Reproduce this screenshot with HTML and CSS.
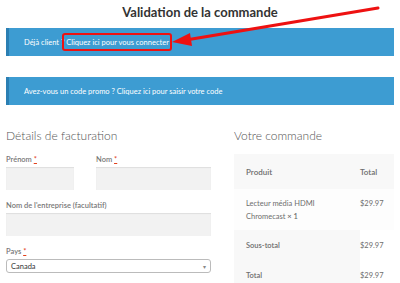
FILE: index.html
```html
<!DOCTYPE html>
<html lang="fr">

<head>
  <meta charset="UTF-8">
  <meta name="viewport" content="width=device-width, initial-scale=1.0">
  <title>Validation de la commande</title>
  <link rel="stylesheet" href="styles.css">
</head>

<body>
  <div class="page">
    <h1 class="page-title">Validation de la commande</h1>

    <div class="notices">
      <div class="notice">
        <span>Déjà client ? <a href="#" class="login-link">Cliquez ici pour vous connecter</a></span>
      </div>
      <div class="notice">
        <span>Avez-vous un code promo ? <a href="#">Cliquez ici pour saisir votre code</a></span>
      </div>
    </div>

    <div class="checkout">
      <div class="billing">
        <h3>Détails de facturation</h3>
        <div class="row-pair">
          <div class="field first">
            <label>Prénom <abbr>*</abbr></label>
            <div class="input"></div>
          </div>
          <div class="field last">
            <label>Nom <abbr>*</abbr></label>
            <div class="input"></div>
          </div>
        </div>
        <div class="field">
          <label>Nom de l'entreprise (facultatif)</label>
          <div class="input"></div>
        </div>
        <div class="field">
          <label>Pays <abbr>*</abbr></label>
          <div class="select">
            <span>Canada</span>
            <span class="caret">&#9662;</span>
          </div>
        </div>
      </div>

      <div class="review">
        <h3>Votre commande</h3>
        <table class="order">
          <thead>
            <tr>
              <th>Produit</th>
              <th>Total</th>
            </tr>
          </thead>
          <tbody>
            <tr class="item">
              <td>Lecteur média HDMI<br>Chromecast <strong>× 1</strong></td>
              <td>$29.97</td>
            </tr>
          </tbody>
          <tfoot>
            <tr>
              <th>Sous-total</th>
              <td>$29.97</td>
            </tr>
            <tr>
              <th>Total</th>
              <td>$29.97</td>
            </tr>
          </tfoot>
        </table>
      </div>
    </div>
  </div>

  <!-- annotation drawn over the screenshot -->
  <div class="highlight"></div>
  <svg class="arrow" width="400" height="60" viewBox="0 0 400 60">
    <line x1="378" y1="8" x2="186" y2="40" stroke="#ee1111" stroke-width="3" stroke-linecap="round" />
    <polygon points="172,42 190,33 192,46" fill="#ee1111" />
  </svg>
</body>

</html>
```

FILE: styles.css
```css
* {
  box-sizing: border-box;
  margin: 0;
  padding: 0;
}

body {
  font-family: Lato, "Open Sans", sans-serif;
  background: #fff;
  color: #6d6d6d;
  position: relative;
  overflow: hidden;
}

.page {
  padding: 0 6px;
}

.page-title {
  font-size: 13px;
  font-weight: 700;
  color: #333;
  text-align: center;
  height: 28px;
  line-height: 25px;
}

.notices {
  display: flex;
  flex-direction: column;
  gap: 21px;
  margin-bottom: 15px;
}

.notice {
  background: #3d9cd2;
  border-left: 3px solid #2b7fb3;
  height: 28px;
  display: flex;
  align-items: center;
  padding-left: 15px;
  font-size: 7.5px;
  color: #fff;
}

.notice a {
  color: #fff;
  text-decoration: none;
}

.checkout {
  display: grid;
  grid-template-columns: 205px 160px;
  column-gap: 23px;
}

.checkout h3 {
  font-size: 12px;
  font-weight: 300;
  color: #555;
  height: 34px;
  line-height: 32px;
}

.row-pair {
  display: flex;
  justify-content: space-between;
}

.field {
  margin-bottom: 10px;
}

.field.first {
  width: 68px;
}

.field.last {
  width: 115px;
}

.field label {
  display: block;
  font-size: 7.5px;
  font-weight: 600;
  color: #777;
  height: 13px;
  line-height: 12px;
}

.field abbr {
  color: #e2401c;
  text-decoration: underline;
}

.input {
  height: 23px;
  background: #f2f2f2;
  box-shadow: inset 0 1px 1px rgba(0, 0, 0, 0.08);
}

.select {
  height: 14px;
  border: 1px solid #bbb;
  border-radius: 3px;
  display: flex;
  justify-content: space-between;
  align-items: center;
  padding: 0 4px;
  font-size: 7.5px;
  color: #333;
}

.select .caret {
  font-size: 6px;
  color: #888;
}

.order {
  width: 100%;
  border-collapse: collapse;
  font-size: 7.5px;
  color: #6d6d6d;
}

.order th,
.order td {
  text-align: left;
  padding: 0 0 0 12px;
  vertical-align: middle;
}

.order thead th {
  background: #f8f8f8;
  height: 35px;
  font-weight: 600;
  font-size: 8px;
}

.order thead th:last-child,
.order td:last-child {
  width: 34px;
  padding-left: 0;
}

.order .item td {
  background: #fdfdfd;
  height: 41px;
  line-height: 13px;
  vertical-align: top;
  padding-top: 8px;
}

.order .item strong {
  font-weight: 600;
}

.order tfoot th {
  background: #f8f8f8;
  font-weight: 600;
  height: 31px;
}

.order tfoot tr:last-child th {
  height: 28px;
}

.highlight {
  position: absolute;
  left: 62px;
  top: 33px;
  width: 110px;
  height: 18px;
  border: 2px solid #ee1111;
  border-radius: 3px;
}

.arrow {
  position: absolute;
  left: 0;
  top: 0;
}
```
